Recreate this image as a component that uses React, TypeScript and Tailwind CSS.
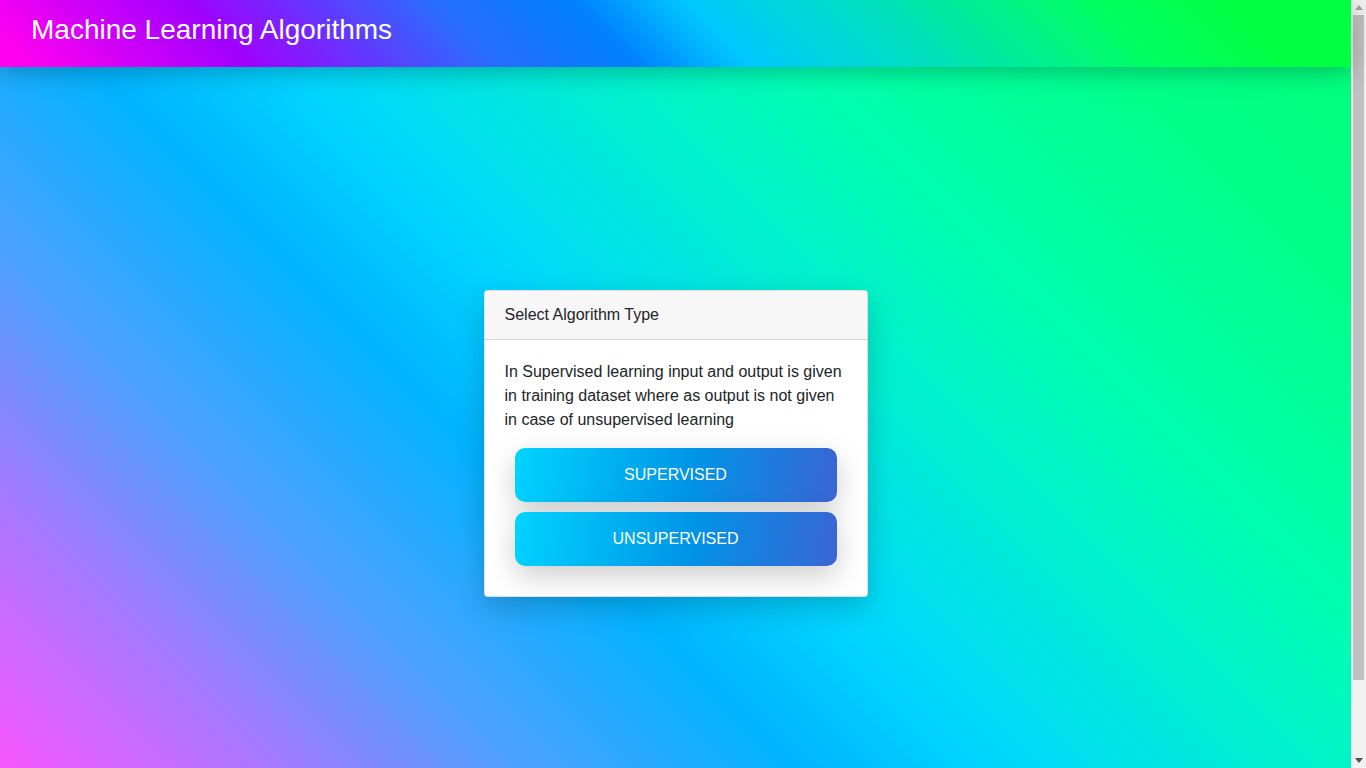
import React from "react";

function Scrollbar() {
  return (
    <div className="sticky top-0 h-screen w-[15px] shrink-0 bg-[#f1f1f1] flex flex-col items-center">
      <div className="h-[15px] w-full flex items-center justify-center">
        <svg width="8" height="5" viewBox="0 0 8 5">
          <polygon points="4,0 8,5 0,5" fill="#a3a3a3" />
        </svg>
      </div>
      <div className="w-[11px] h-[665px] bg-[#c1c1c1]" />
      <div className="flex-1" />
      <div className="h-[15px] w-full flex items-center justify-center">
        <svg width="8" height="5" viewBox="0 0 8 5">
          <polygon points="0,0 8,0 4,5" fill="#505050" />
        </svg>
      </div>
    </div>
  );
}

export default function App() {
  return (
    <div className="flex items-start font-['Liberation_Sans',Arial,sans-serif]">
      <div className="w-[1351px] shrink-0 min-h-screen bg-[linear-gradient(45deg,#ff50ff_0%,#f757ff_4%,#a878ff_16%,#50a0ff_27%,#00b4ff_40%,#00d6ff_49%,#00eed4_61%,#00ffb0_72%,#00ff8a_86%,#00ff78_100%)]">
        <header className="relative z-10 h-[67px] px-[31px] pt-[16px] flex items-start bg-[linear-gradient(45deg,#ff00f0_0%,#ff00f0_2%,#a000ff_17.7%,#2a6cff_35%,#0080ff_45%,#00c8ff_53%,#00dcc8_64%,#00ff60_82%,#00ff40_92%,#00ff40_100%)] shadow-[0_5px_25px_rgba(0,0,0,0.25)]">
          <h1 className="text-[28px] leading-none text-white font-normal">Machine Learning Algorithms</h1>
        </header>
        <main className="flex justify-center pt-[223px] pb-[255px]">
          <div className="w-[384px] bg-white border border-[rgba(0,0,0,0.125)] rounded-[4px] shadow-[0_10px_30px_rgba(0,0,0,0.2)]">
            <div className="bg-[#f7f7f7] border-b border-[rgba(0,0,0,0.125)] rounded-t-[3px] px-5 py-3 text-base leading-6 text-[#212529]">
              Select Algorithm Type
            </div>
            <div className="p-5">
              <p className="text-base leading-6 text-[#212529] mb-4">
                In Supervised learning input and output is given in training dataset where as output is not given in case of unsupervised learning
              </p>
              <div className="flex flex-col items-center gap-[10px] pb-[10px]">
                <button className="w-[322px] h-[54px] rounded-[10px] text-white text-base bg-[linear-gradient(100deg,#00d4ff_0%,#0094e6_55%,#3a64d4_100%)] shadow-[0_10px_30px_rgba(0,0,0,0.2)]">
                  SUPERVISED
                </button>
                <button className="w-[322px] h-[54px] rounded-[10px] text-white text-base bg-[linear-gradient(100deg,#00d4ff_0%,#0094e6_55%,#3a64d4_100%)] shadow-[0_10px_30px_rgba(0,0,0,0.2)]">
                  UNSUPERVISED
                </button>
              </div>
            </div>
          </div>
        </main>
      </div>
      <Scrollbar />
    </div>
  );
}
